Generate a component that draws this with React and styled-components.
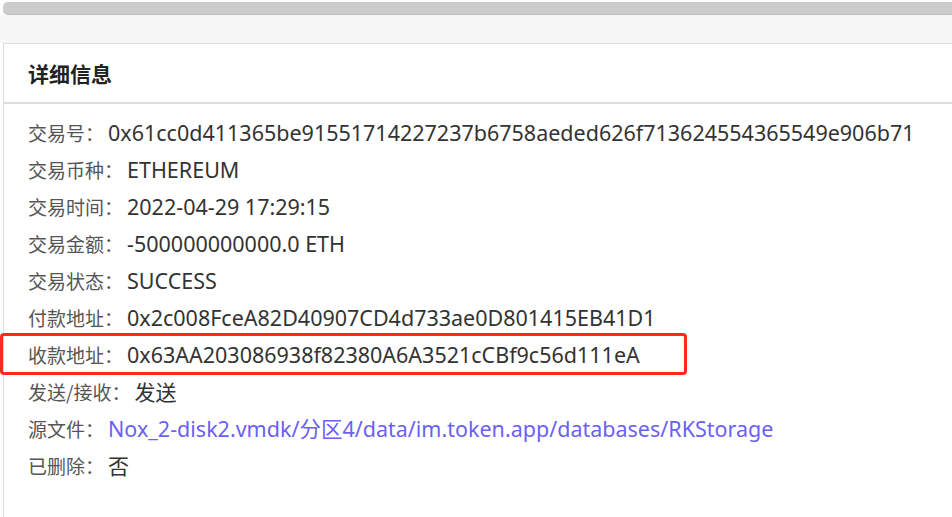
import React from "react";
import styled, { createGlobalStyle } from "styled-components";

const GlobalStyle = createGlobalStyle`
  html, body {
    margin: 0;
    padding: 0;
    background: #ffffff;
  }
  body {
    font-family: "Noto Sans", "Noto Sans CJK SC", sans-serif;
    overflow: hidden;
  }
`;

const Page = styled.div`
  position: relative;
  width: 952px;
  height: 517px;
  display: flex;
  flex-direction: column;
  overflow: hidden;
`;

const ScrollTrack = styled.div`
  margin-top: 2px;
  margin-left: 3px;
  height: 12px;
  background: #cccccc;
  border-radius: 5px 0 0 5px;
  border-bottom: 1px solid #b8bdc6;
`;

const Strip = styled.div`
  height: 28px;
  background: #f7f7f7;
`;

const Card = styled.section`
  flex: 1;
  margin-left: 3px;
  border-left: 1px solid #dddddd;
  border-top: 1px solid #dddddd;
  background: #ffffff;
  display: flex;
  flex-direction: column;
`;

const CardHeader = styled.h2`
  margin: 0;
  height: 58px;
  padding-left: 24px;
  display: flex;
  align-items: center;
  font-family: "Noto Sans CJK SC", sans-serif;
  font-size: 21px;
  font-weight: 700;
  color: #222222;
  border-bottom: 2px solid #dddddd;
`;

const CardBody = styled.div`
  padding: 10px 0 0 24px;
  display: flex;
  flex-direction: column;
`;

const Row = styled.div`
  height: 37px;
  display: flex;
  align-items: center;
  white-space: nowrap;
`;

const Label = styled.span`
  font-family: "Noto Sans CJK SC", sans-serif;
  font-size: 19px;
  line-height: 1;
  color: #555555;
  margin-right: 4px;
`;

const Value = styled.span`
  font-family: ${(p) => (p.$cjk ? '"Noto Sans CJK SC", sans-serif' : '"Noto Sans", "Noto Sans CJK SC", sans-serif')};
  font-size: ${(p) => (p.$cjk ? "21px" : "21.5px")};
  line-height: 1;
  color: ${(p) => (p.$link ? "#6c5ff5" : "#333333")};
`;

const Highlight = styled.div`
  position: absolute;
  left: 0;
  top: 333px;
  width: 687px;
  height: 42px;
  box-sizing: border-box;
  border: 3px solid #ff2a1c;
  border-radius: 4px;
  pointer-events: none;
`;

const rows = [
  { label: "交易号：", value: "0x61cc0d411365be91551714227237b6758aeded626f713624554365549e906b71" },
  { label: "交易币种：", value: "ETHEREUM" },
  { label: "交易时间：", value: "2022-04-29 17:29:15" },
  { label: "交易金额：", value: "-500000000000.0 ETH" },
  { label: "交易状态：", value: "SUCCESS" },
  { label: "付款地址：", value: "0x2c008FceA82D40907CD4d733ae0D801415EB41D1" },
  { label: "收款地址：", value: "0x63AA203086938f82380A6A3521cCBf9c56d111eA" },
  { label: "发送/接收：", value: "发送", cjk: true },
  { label: "源文件：", value: "Nox_2-disk2.vmdk/分区4/data/im.token.app/databases/RKStorage", link: true },
  { label: "已删除：", value: "否", cjk: true },
];

export default function App() {
  return (
    <>
      <GlobalStyle />
      <Page>
        <ScrollTrack />
        <Strip />
        <Card>
          <CardHeader>详细信息</CardHeader>
          <CardBody>
            {rows.map((r) => (
              <Row key={r.label}>
                <Label>{r.label}</Label>
                <Value $cjk={r.cjk} $link={r.link}>{r.value}</Value>
              </Row>
            ))}
          </CardBody>
        </Card>
        <Highlight />
      </Page>
    </>
  );
}
